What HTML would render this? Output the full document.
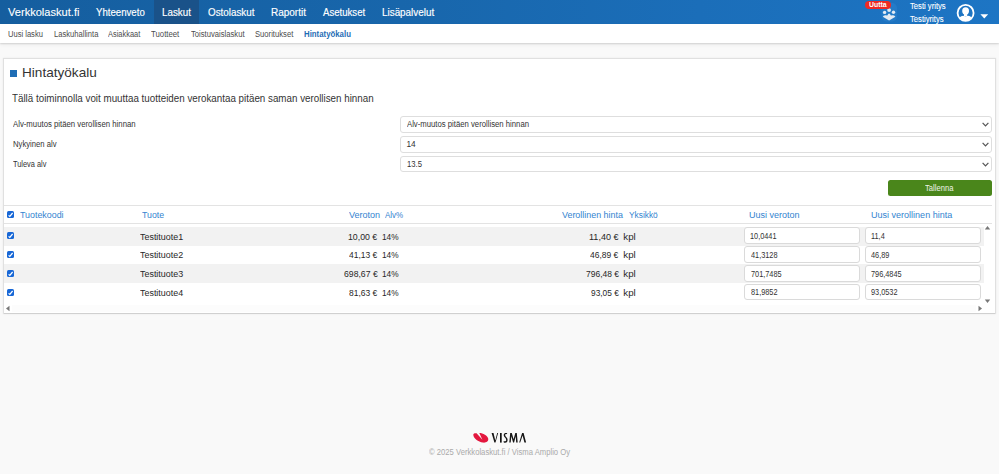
<!DOCTYPE html>
<html><head><meta charset="utf-8">
<style>
*{margin:0;padding:0;box-sizing:border-box}
html,body{width:999px;height:474px;overflow:hidden;background:#f9f9f9;font-family:"Liberation Sans",sans-serif;position:relative}
.a{position:absolute;white-space:nowrap;line-height:1;transform-origin:0 0}
.b{position:absolute}
#hdr{left:0;top:0;width:999px;height:24px;background:linear-gradient(to right,#155e9f 0%,#1866ab 40%,#1b6eb9 70%,#1d75c4 100%)}
#act{left:154px;top:0;width:45px;height:24px;background:#1a5289}
#sub{left:0;top:24px;width:999px;height:18.5px;background:#fff;box-shadow:0 1px 1.5px rgba(0,0,0,.13),0 2px 4px rgba(0,0,0,.05)}
#panel{left:4px;top:59px;width:991px;height:254px;background:#fff;box-shadow:0 1px 0 0 #d0d0d0,0 0 0 1px #e0e0e0,0 0 2px 1px rgba(0,0,0,.07)}
.sel{position:absolute;left:400.2px;width:592px;height:16.5px;border:1px solid #dedede;border-radius:3px;background:#fff}
.chev{position:absolute;left:581.1px;top:5px}
.row{position:absolute;left:4px;width:980px;height:19px}
.g{background:#f2f2f2}
.cb{position:absolute;left:7px;width:7px;height:7px;background:#1767d6;border-radius:1.5px}
.cb svg{position:absolute;left:0;top:0}
.inp{position:absolute;height:16.5px;border:1px solid #dadada;border-radius:3px;background:#fff}
</style></head><body>
<div id="hdr" class="b"></div>
<div id="act" class="b"></div>

<!-- people icon + badge -->
<svg class="b" style="left:880px;top:2px" width="18" height="20" viewBox="0 0 18 20">
  <rect x="1.5" y="1" width="15.5" height="18.5" rx="5" fill="#3a90dc" opacity=".28"/>
  <g fill="#e4ebf3">
    <circle cx="4.6" cy="10.4" r="1.7"/>
    <circle cx="13.5" cy="10.2" r="1.7"/>
    <circle cx="9.1" cy="8.1" r="1.9"/>
    <path d="M2.8 14.8 Q3.5 13 5.5 13.2 L7.3 13.4 Q8.3 11.6 9.1 11.6 Q9.9 11.6 10.9 13.4 L12.7 13.2 Q14.7 13 15.4 14.8 L9.1 18.4 Z"/>
  </g>
</svg>
<div class="b" style="left:865px;top:1px;width:26.2px;height:8.2px;background:#ee2a24;border-radius:4.2px"></div>

<!-- avatar -->
<svg class="b" style="left:955px;top:2px" width="22" height="22" viewBox="0 0 22 22">
  <defs><clipPath id="cc"><circle cx="10.6" cy="10.9" r="7.7"/></clipPath></defs>
  <circle cx="10.6" cy="10.9" r="8" fill="none" stroke="#fff" stroke-width="1.8"/>
  <g clip-path="url(#cc)" fill="#fff">
    <ellipse cx="10.6" cy="8.9" rx="3.4" ry="3.7"/>
    <rect x="9" y="11" width="3.2" height="3.5"/>
    <path d="M2.5 21 Q2.8 14.6 8.2 13.8 L10.6 14.6 L13 13.8 Q18.4 14.6 18.7 21 Z"/>
  </g>
</svg>
<svg class="b" style="left:980px;top:13.5px" width="9" height="5" viewBox="0 0 9 5"><path d="M0.4 0.2 H8.2 L4.3 4.5 Z" fill="#fff"/></svg>

<div id="sub" class="b"></div>

<div id="panel" class="b"></div>
<div class="b" style="left:10px;top:70px;width:7px;height:7px;background:#1f6db5"></div>

<div class="sel" style="top:116.2px"><svg class="chev" width="7" height="5" viewBox="0 0 7 5"><path d="M0.6 0.8 L3.5 3.8 L6.4 0.8" fill="none" stroke="#555" stroke-width="1.2"/></svg></div>
<div class="sel" style="top:136px"><svg class="chev" width="7" height="5" viewBox="0 0 7 5"><path d="M0.6 0.8 L3.5 3.8 L6.4 0.8" fill="none" stroke="#555" stroke-width="1.2"/></svg></div>
<div class="sel" style="top:155.6px"><svg class="chev" width="7" height="5" viewBox="0 0 7 5"><path d="M0.6 0.8 L3.5 3.8 L6.4 0.8" fill="none" stroke="#555" stroke-width="1.2"/></svg></div>

<div class="b" style="left:887.6px;top:179.8px;width:104.4px;height:15.8px;background:#4a861b;border-radius:2.5px"></div>

<!-- table -->
<div class="b" style="left:4px;top:205px;width:988px;height:1px;background:#e3e3e3"></div>
<div class="b" style="left:4px;top:223px;width:988px;height:1px;background:#e3e3e3"></div>

<div class="row g" style="top:226.8px;height:18.8px"></div>
<div class="row g" style="top:264.3px;height:18.7px"></div>

<div class="cb" style="top:210.5px"><svg width="7" height="7" viewBox="0 0 7 7"><path d="M1.6 4.4 L2.8 5.4 L5.6 2" fill="none" stroke="#fff" stroke-width="1.2"/></svg></div>
<div class="cb" style="top:232.2px"><svg width="7" height="7" viewBox="0 0 7 7"><path d="M1.6 4.4 L2.8 5.4 L5.6 2" fill="none" stroke="#fff" stroke-width="1.2"/></svg></div>
<div class="cb" style="top:251px"><svg width="7" height="7" viewBox="0 0 7 7"><path d="M1.6 4.4 L2.8 5.4 L5.6 2" fill="none" stroke="#fff" stroke-width="1.2"/></svg></div>
<div class="cb" style="top:269.9px"><svg width="7" height="7" viewBox="0 0 7 7"><path d="M1.6 4.4 L2.8 5.4 L5.6 2" fill="none" stroke="#fff" stroke-width="1.2"/></svg></div>
<div class="cb" style="top:288.8px"><svg width="7" height="7" viewBox="0 0 7 7"><path d="M1.6 4.4 L2.8 5.4 L5.6 2" fill="none" stroke="#fff" stroke-width="1.2"/></svg></div>

<div class="inp" style="left:744.2px;width:115.8px;top:227.4px"></div>
<div class="inp" style="left:865.2px;width:116.2px;top:227.4px"></div>
<div class="inp" style="left:744.2px;width:115.8px;top:246.3px"></div>
<div class="inp" style="left:865.2px;width:116.2px;top:246.3px"></div>
<div class="inp" style="left:744.2px;width:115.8px;top:265px"></div>
<div class="inp" style="left:865.2px;width:116.2px;top:265px"></div>
<div class="inp" style="left:744.2px;width:115.8px;top:283.5px"></div>
<div class="inp" style="left:865.2px;width:116.2px;top:283.5px"></div>

<!-- scrollbars -->
<div class="b" style="left:12px;top:305px;width:964px;height:6.5px;background:#fcfcfc"></div>
<svg class="b" style="left:5px;top:305px" width="6" height="7" viewBox="0 0 6 7"><path d="M1 3.5 L4.5 0.8 V6.2 Z" fill="#777"/></svg>
<svg class="b" style="left:977px;top:305px" width="6" height="7" viewBox="0 0 6 7"><path d="M5 3.5 L1.5 0.8 V6.2 Z" fill="#777"/></svg>
<svg class="b" style="left:984px;top:225px" width="7" height="6" viewBox="0 0 7 6"><path d="M3.5 1 L6.2 4.5 H0.8 Z" fill="#777"/></svg>
<svg class="b" style="left:984px;top:297.5px" width="7" height="6" viewBox="0 0 7 6"><path d="M3.5 5 L6.2 1.5 H0.8 Z" fill="#777"/></svg>

<!-- footer logo -->
<svg class="b" style="left:472px;top:431px" width="56" height="13" viewBox="0 0 56 13">
  <path d="M1.3 3.6 C1.6 2.2 3.2 2 4.6 2.3 L10.4 8.8 L7.3 2 C11 2 15.6 4.6 16.2 7.6 C16.8 10.6 14 12 10.8 11.6 C6.6 11 1 7.2 1.3 3.6 Z" fill="#e3173e"/>
  <g fill="#161616">
    <path d="M19.6 2 H21.5 L23.3 9.6 L25.2 2 H26.1 L23.5 11.6 H22.4 Z"/>
    <rect x="28" y="2" width="1.7" height="9.6"/>
    <path d="M35.2 2.4 C34.4 1.8 31.7 1.9 31.7 4.2 C31.7 6.4 34.2 6.6 34.2 8.9 C34.2 10.3 32.9 10.6 31.6 10.1 L31.8 11.4 C33.2 11.9 35.6 11.8 35.6 8.9 C35.6 6.2 33.2 6 33.2 4 C33.2 2.9 34.2 2.9 35 3.3 Z"/>
    <path d="M37.3 11.6 L38.2 2 H39.8 L41.6 8.2 L43.3 2 H44.8 L45.7 11.6 H44.2 L43.7 5.2 L42.1 11.6 H41.1 L39.3 5.2 L38.7 11.6 Z"/>
    <path d="M47.2 11.6 L50.1 2 H51.6 L54.1 11.6 H52.4 L50.6 4.4 L48.2 11.6 Z"/>
  </g>
</svg>

<div class="a" style="left:8.00px;top:7px;font-size:11.2px;color:#fff;font-weight:normal;transform:scaleX(0.9903);-webkit-text-stroke:0.1px #fff">Verkkolaskut.fi</div>
<div class="a" style="left:96.30px;top:8px;font-size:10.2px;color:#fff;font-weight:normal;transform:scaleX(0.9462);-webkit-text-stroke:0.15px #fff">Yhteenveto</div>
<div class="a" style="left:162.04px;top:8px;font-size:10.2px;color:#fff;font-weight:normal;transform:scaleX(0.9621);-webkit-text-stroke:0.15px #fff">Laskut</div>
<div class="a" style="left:208.00px;top:8px;font-size:10.2px;color:#fff;font-weight:normal;transform:scaleX(0.9646);-webkit-text-stroke:0.15px #fff">Ostolaskut</div>
<div class="a" style="left:270.72px;top:8px;font-size:10.2px;color:#fff;font-weight:normal;transform:scaleX(0.9800);-webkit-text-stroke:0.15px #fff">Raportit</div>
<div class="a" style="left:323.00px;top:8px;font-size:10.2px;color:#fff;font-weight:normal;transform:scaleX(0.9422);-webkit-text-stroke:0.15px #fff">Asetukset</div>
<div class="a" style="left:381.53px;top:8px;font-size:10.2px;color:#fff;font-weight:normal;transform:scaleX(0.9698);-webkit-text-stroke:0.15px #fff">Lisäpalvelut</div>
<div class="a" style="left:910.40px;top:2px;font-size:8.4px;color:#fff;font-weight:normal;transform:scaleX(0.9128);-webkit-text-stroke:0.1px #fff">Testi yritys</div>
<div class="a" style="left:910.20px;top:15px;font-size:8.4px;color:#fff;font-weight:normal;transform:scaleX(0.9135);-webkit-text-stroke:0.1px #fff">Testiyritys</div>
<div class="a" style="left:869.00px;top:2px;font-size:6.6px;color:#fff;font-weight:bold;transform:scaleX(1.0471);">Uutta</div>
<div class="a" style="left:8.20px;top:30px;font-size:8.5px;color:#4c4c4c;font-weight:normal;transform:scaleX(0.8897);">Uusi lasku</div>
<div class="a" style="left:53.50px;top:30px;font-size:8.5px;color:#4c4c4c;font-weight:normal;transform:scaleX(0.8940);">Laskuhallinta</div>
<div class="a" style="left:108.10px;top:30px;font-size:8.5px;color:#4c4c4c;font-weight:normal;transform:scaleX(0.8757);">Asiakkaat</div>
<div class="a" style="left:151.40px;top:30px;font-size:8.5px;color:#4c4c4c;font-weight:normal;transform:scaleX(0.9161);">Tuotteet</div>
<div class="a" style="left:190.50px;top:30px;font-size:8.5px;color:#4c4c4c;font-weight:normal;transform:scaleX(0.9000);">Toistuvaislaskut</div>
<div class="a" style="left:254.80px;top:30px;font-size:8.5px;color:#4c4c4c;font-weight:normal;transform:scaleX(0.9000);">Suoritukset</div>
<div class="a" style="left:304.30px;top:30px;font-size:8.5px;color:#1f6db5;font-weight:bold;transform:scaleX(0.9196);">Hintatyökalu</div>
<div class="a" style="left:21.62px;top:67px;font-size:12.6px;color:#333;font-weight:normal;transform:scaleX(1.0794);">Hintatyökalu</div>
<div class="a" style="left:11.90px;top:93px;font-size:10.8px;color:#333;font-weight:normal;transform:scaleX(0.9075);">Tällä toiminnolla voit muuttaa tuotteiden verokantaa pitäen saman verollisen hinnan</div>
<div class="a" style="left:13.20px;top:120px;font-size:8.3px;color:#333;font-weight:normal;transform:scaleX(0.9359);">Alv-muutos pitäen verollisen hinnan</div>
<div class="a" style="left:13.40px;top:140px;font-size:8.3px;color:#333;font-weight:normal;transform:scaleX(0.9255);">Nykyinen alv</div>
<div class="a" style="left:13.40px;top:160px;font-size:8.3px;color:#333;font-weight:normal;transform:scaleX(0.8895);">Tuleva alv</div>
<div class="a" style="left:407.20px;top:120px;font-size:8.3px;color:#333;font-weight:normal;transform:scaleX(0.9313);">Alv-muutos pitäen verollisen hinnan</div>
<div class="a" style="left:406.50px;top:140px;font-size:8.3px;color:#333;font-weight:normal;transform:scaleX(1.0000);">14</div>
<div class="a" style="left:406.57px;top:160px;font-size:8.3px;color:#333;font-weight:normal;transform:scaleX(0.9267);">13.5</div>
<div class="a" style="left:925.10px;top:185px;font-size:8.2px;color:#eef3ea;font-weight:normal;transform:scaleX(0.9323);">Tallenna</div>
<div class="a" style="left:20.05px;top:210px;font-size:9.6px;color:#3384d0;font-weight:normal;transform:scaleX(0.9245);">Tuotekoodi</div>
<div class="a" style="left:141.60px;top:210px;font-size:9.6px;color:#3384d0;font-weight:normal;transform:scaleX(0.9125);">Tuote</div>
<div class="a" style="left:348.80px;top:210px;font-size:9.6px;color:#3384d0;font-weight:normal;transform:scaleX(0.9394);">Veroton</div>
<div class="a" style="left:384.90px;top:210px;font-size:9.6px;color:#3384d0;font-weight:normal;transform:scaleX(0.8318);">Alv%</div>
<div class="a" style="left:562.00px;top:210px;font-size:9.6px;color:#3384d0;font-weight:normal;transform:scaleX(0.9288);">Verollinen hinta</div>
<div class="a" style="left:628.50px;top:210px;font-size:9.6px;color:#3384d0;font-weight:normal;transform:scaleX(0.8697);">Yksikkö</div>
<div class="a" style="left:749.26px;top:210px;font-size:9.6px;color:#3384d0;font-weight:normal;transform:scaleX(0.9396);">Uusi veroton</div>
<div class="a" style="left:871.26px;top:210px;font-size:9.6px;color:#3384d0;font-weight:normal;transform:scaleX(0.9400);">Uusi verollinen hinta</div>
<div class="a" style="left:140.40px;top:232px;font-size:9.7px;color:#282828;font-weight:normal;transform:scaleX(0.9213);">Testituote1</div>
<div class="a" style="left:347.90px;top:232px;font-size:9.7px;color:#282828;font-weight:normal;transform:scaleX(0.9032);">10,00 €</div>
<div class="a" style="left:381.54px;top:232px;font-size:9.7px;color:#282828;font-weight:normal;transform:scaleX(0.8556);">14%</div>
<div class="a" style="left:589.27px;top:232px;font-size:9.7px;color:#282828;font-weight:normal;transform:scaleX(0.9333);">11,40 €</div>
<div class="a" style="left:623.30px;top:232px;font-size:9.7px;color:#282828;font-weight:normal;transform:scaleX(1.0000);">kpl</div>
<div class="a" style="left:750.04px;top:232px;font-size:8.5px;color:#333;font-weight:normal;transform:scaleX(0.8627);">10,0441</div>
<div class="a" style="left:870.54px;top:232px;font-size:8.5px;color:#333;font-weight:normal;transform:scaleX(0.8627);">11,4</div>
<div class="a" style="left:140.40px;top:250px;font-size:9.7px;color:#282828;font-weight:normal;transform:scaleX(0.9213);">Testituote2</div>
<div class="a" style="left:348.80px;top:250px;font-size:9.7px;color:#282828;font-weight:normal;transform:scaleX(0.8750);">41,13 €</div>
<div class="a" style="left:381.54px;top:250px;font-size:9.7px;color:#282828;font-weight:normal;transform:scaleX(0.8556);">14%</div>
<div class="a" style="left:590.20px;top:250px;font-size:9.7px;color:#282828;font-weight:normal;transform:scaleX(0.8750);">46,89 €</div>
<div class="a" style="left:623.30px;top:250px;font-size:9.7px;color:#282828;font-weight:normal;transform:scaleX(1.0000);">kpl</div>
<div class="a" style="left:750.90px;top:251px;font-size:8.5px;color:#333;font-weight:normal;transform:scaleX(0.8627);">41,3128</div>
<div class="a" style="left:871.40px;top:251px;font-size:8.5px;color:#333;font-weight:normal;transform:scaleX(0.8627);">46,89</div>
<div class="a" style="left:140.40px;top:269px;font-size:9.7px;color:#282828;font-weight:normal;transform:scaleX(0.9213);">Testituote3</div>
<div class="a" style="left:343.70px;top:269px;font-size:9.7px;color:#282828;font-weight:normal;transform:scaleX(0.8946);">698,67 €</div>
<div class="a" style="left:381.54px;top:269px;font-size:9.7px;color:#282828;font-weight:normal;transform:scaleX(0.8556);">14%</div>
<div class="a" style="left:585.80px;top:269px;font-size:9.7px;color:#282828;font-weight:normal;transform:scaleX(0.8757);">796,48 €</div>
<div class="a" style="left:623.30px;top:269px;font-size:9.7px;color:#282828;font-weight:normal;transform:scaleX(1.0000);">kpl</div>
<div class="a" style="left:750.90px;top:270px;font-size:8.5px;color:#333;font-weight:normal;transform:scaleX(0.8627);">701,7485</div>
<div class="a" style="left:871.40px;top:270px;font-size:8.5px;color:#333;font-weight:normal;transform:scaleX(0.8627);">796,4845</div>
<div class="a" style="left:140.40px;top:288px;font-size:9.7px;color:#282828;font-weight:normal;transform:scaleX(0.9213);">Testituote4</div>
<div class="a" style="left:348.80px;top:288px;font-size:9.7px;color:#282828;font-weight:normal;transform:scaleX(0.8750);">81,63 €</div>
<div class="a" style="left:381.54px;top:288px;font-size:9.7px;color:#282828;font-weight:normal;transform:scaleX(0.8556);">14%</div>
<div class="a" style="left:590.70px;top:288px;font-size:9.7px;color:#282828;font-weight:normal;transform:scaleX(0.8594);">93,05 €</div>
<div class="a" style="left:623.30px;top:288px;font-size:9.7px;color:#282828;font-weight:normal;transform:scaleX(1.0000);">kpl</div>
<div class="a" style="left:750.90px;top:288px;font-size:8.5px;color:#333;font-weight:normal;transform:scaleX(0.8627);">81,9852</div>
<div class="a" style="left:871.40px;top:288px;font-size:8.5px;color:#333;font-weight:normal;transform:scaleX(0.8627);">93,0532</div>
<div class="a" style="left:429.20px;top:448px;font-size:8.4px;color:#aaaaaa;font-weight:normal;transform:scaleX(0.9156);">© 2025 Verkkolaskut.fi / Visma Amplio Oy</div>
</body></html>
